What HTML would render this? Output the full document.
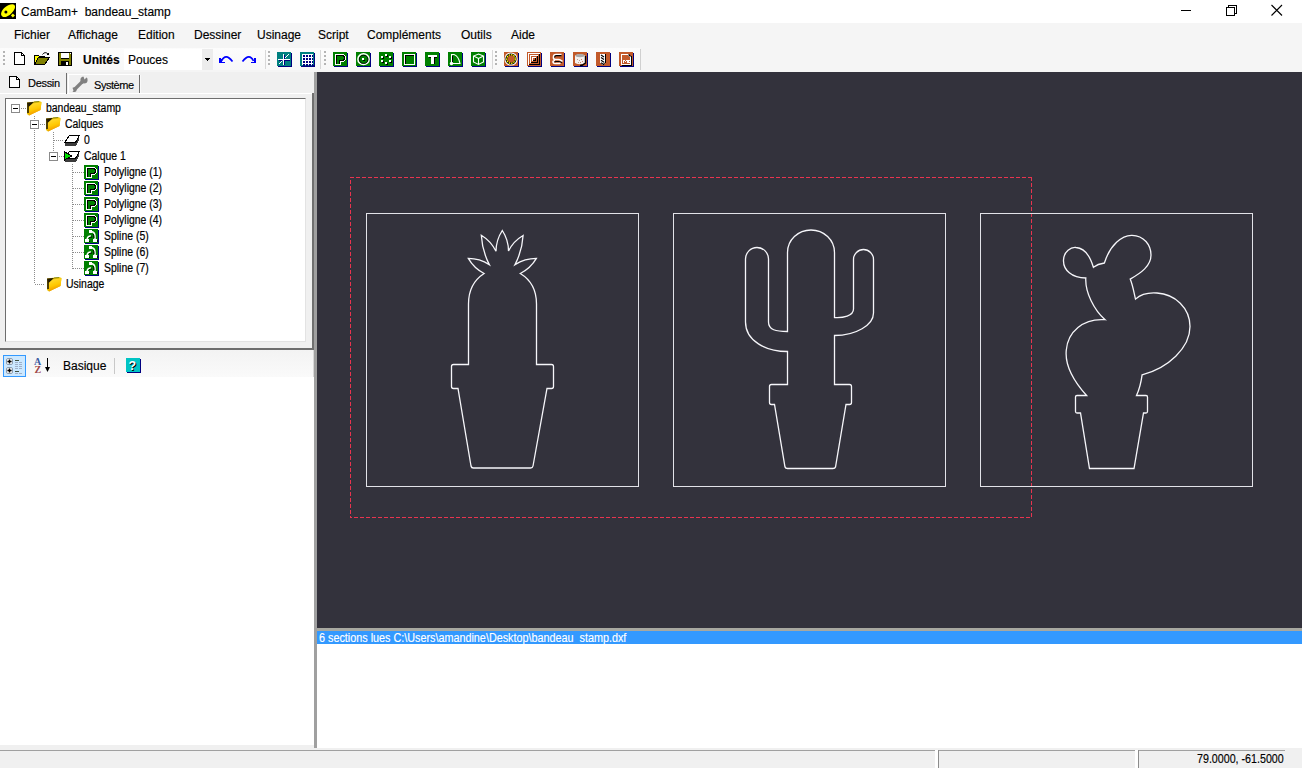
<!DOCTYPE html>
<html><head><meta charset="utf-8">
<style>
*{margin:0;padding:0;box-sizing:border-box}
html,body{width:1302px;height:768px;overflow:hidden;background:#f0f0f0;font-family:"Liberation Sans",sans-serif;position:relative}
.a{position:absolute}
.t{position:absolute;white-space:nowrap;color:#000;line-height:1;-webkit-text-stroke:0.15px currentColor}
.m{font-size:12px;top:29px}
.tr{font-size:12px;transform:scaleX(0.87);transform-origin:0 0;-webkit-text-stroke:0.2px #000}
</style></head><body>
<div class="a" style="left:0;top:0;width:1302px;height:23px;background:#fff"></div>
<div class="t" style="left:21px;top:6px;font-size:12px">CamBam+&nbsp;&nbsp;bandeau_stamp</div>
<div class="a" style="left:0;top:23px;width:1302px;height:49px;background:#f5f5f5"></div>
<div class="t m" style="left:14px">Fichier</div>
<div class="t m" style="left:68px">Affichage</div>
<div class="t m" style="left:138px">Edition</div>
<div class="t m" style="left:194px">Dessiner</div>
<div class="t m" style="left:257px">Usinage</div>
<div class="t m" style="left:318px">Script</div>
<div class="t m" style="left:367px">Compléments</div>
<div class="t m" style="left:461px">Outils</div>
<div class="t m" style="left:511px">Aide</div>
<div class="a" style="left:0;top:48px;width:640px;height:22px;background:linear-gradient(#fcfcfc,#f8f8f8)"></div>
<div class="t" style="left:83px;top:54px;font-size:12px;font-weight:bold">Unités</div>
<div class="a" style="left:124px;top:49px;width:78px;height:21px;background:#fff"></div>
<div class="a" style="left:202px;top:49px;width:11px;height:21px;background:#ececec"></div>
<div class="t" style="left:128px;top:54px;font-size:12px">Pouces</div>
<div class="a" style="left:0;top:72px;width:314px;height:676px;background:#f0f0f0"></div>
<div class="a" style="left:0;top:93px;width:313px;height:1px;background:#fff"></div>
<div class="a" style="left:66px;top:73px;width:1px;height:21px;background:#6e6e6e"></div>
<div class="a" style="left:68px;top:74px;width:71px;height:1px;background:#fff"></div>
<div class="a" style="left:68px;top:74px;width:1px;height:19px;background:#fff"></div>
<div class="a" style="left:139px;top:75px;width:1px;height:18px;background:#6e6e6e"></div>
<div class="a" style="left:140px;top:75px;width:1px;height:18px;background:#fafafa"></div>
<div class="t" style="left:28px;top:78px;font-size:11px;letter-spacing:-0.3px">Dessin</div>
<div class="t" style="left:94px;top:80px;font-size:11px;letter-spacing:-0.45px">Système</div>
<div class="a" style="left:317px;top:72px;width:985px;height:556px;background:#33323c"></div>
<div class="a" style="left:312px;top:93px;width:2px;height:257px;background:#707070"></div>
<div class="a" style="left:314px;top:72px;width:3px;height:676px;background:#a0a0a0"></div>
<svg class="a" style="left:0;top:0" width="1302" height="768" viewBox="0 0 1302 768">
<g fill="none" stroke-width="1">
<g stroke="#e8344f" stroke-dasharray="4 2" shape-rendering="crispEdges">
<path d="M350,177.5 H1032"/>
<path d="M350,517.5 H1032" stroke-dashoffset="2"/>
<path d="M350.5,177 V518" stroke-dashoffset="3"/>
<path d="M1031.5,177 V518"/>
</g>
<rect x="366.5" y="213.5" width="272" height="273" stroke="#e2e2e8"/>
<rect x="673.5" y="213.5" width="272" height="273" stroke="#e2e2e8"/>
<rect x="980.5" y="213.5" width="272" height="273" stroke="#e2e2e8"/>
<path d="M468.5,364.5 L468.5,304 C468.5,290 474,280 484.1,273.5 Q473.99,268.26 468.30,258.40 Q479.71,258.43 489.30,264.60 Q482.21,250.74 481.30,235.20 Q491.01,241.09 496.00,251.30 Q496.09,239.97 502.30,230.50 Q508.46,239.82 508.50,251.00 Q513.47,241.06 523.10,235.50 Q522.13,250.91 515.00,264.60 Q524.81,258.43 536.40,258.40 Q530.54,268.28 520.30,273.50 C531,280 536.5,290 536.5,304 L536.5,364.5 L551.5,364.5 Q553.5,364.5 553.5,366.5 L553.5,386.5 Q553.5,388.5 551.5,388.5 L547,388.5 L533,466 Q532.6,468 530.6,468 L473.4,468 Q471.4,468 471,466 L458,388.5 L453.5,388.5 Q451.5,388.5 451.5,386.5 L451.5,366.5 Q451.5,364.5 453.5,364.5 Z" stroke="#f6f6fa" stroke-width="1.3"/>
<path d="M787.5,384.5 L787.5,351.5 C766,351.5 745.5,341 745.5,322 L745.5,259 A11.5,11.5 0 0 1 768.5,259 L768.5,322 C768.5,330 776,331.5 787.5,331.5 L787.5,252.5 A23.5,22.5 0 0 1 834.5,252.5 L834.5,317.5 C843,318 853.5,316 853.5,309 L853.5,259.5 A10,10 0 0 1 873.5,259.5 L873.5,313 C873.5,325 856,335.5 834.5,335.5 L834.5,384.5 L849.5,384.5 Q851.5,384.5 851.5,386.5 L851.5,402.5 Q851.5,404.5 849.5,404.5 L846,404.5 L835.5,467 Q835,468.5 833,468.5 L787.5,468.5 Q785.5,468.5 785,467 L774.5,404.5 L771.5,404.5 Q769.5,404.5 769.5,402.5 L769.5,386.5 Q769.5,384.5 771.5,384.5 Z" stroke="#f6f6fa" stroke-width="1.3"/>
<path d="M1086.6,395.5 C1071,378 1065,362 1066.3,350 C1067.8,332 1083,318 1105.1,319.7 C1094,310 1085,292 1085.8,278 C1072,278 1063,270 1063.5,260 C1064,251 1071,247 1076,247.5 C1085,248 1090,256 1093.4,267.3 C1097,264.5 1101,263.5 1104.4,263 C1110,245 1122,235 1132,235.3 C1144,235.5 1151,245 1151,255 C1151,266 1141,273 1130.2,279.1 C1133,286 1134,293 1135.5,299.1 C1142,293 1150,292.5 1157,293 C1175,294 1190,308 1190,326.5 C1190,348 1168,368 1142.1,374.8 C1141,383 1139,390 1136.5,395.5 L1146,395.5 Q1147.5,395.5 1147.5,397 L1147.5,411.5 Q1147.5,413 1146,413 L1143.5,413 L1134,468.5 L1089.5,468.5 L1080.5,413 L1077,413 Q1075.5,413 1075.5,411.5 L1075.5,397 Q1075.5,395.5 1077,395.5 Z" stroke="#f6f6fa" stroke-width="1.3"/>
</g></svg>
<div class="a" style="left:317px;top:628px;width:985px;height:3px;background:#a8a8a0"></div>
<div class="a" style="left:317px;top:631px;width:985px;height:13px;background:#3399ff"></div>
<div class="t" style="left:319px;top:632px;font-size:12px;color:#fff;transform:scaleX(0.9);transform-origin:0 0">6 sections lues C:\Users\amandine\Desktop\bandeau_stamp.dxf</div>
<div class="a" style="left:317px;top:644px;width:985px;height:104px;background:#fff"></div>
<div class="a" style="left:5px;top:98px;width:301px;height:244px;background:#fff;border-top:1px solid #6e6e6e;border-left:1px solid #6e6e6e;border-right:1px solid #e3e3e3;border-bottom:1px solid #e3e3e3"></div>
<div class="t tr" style="left:46px;top:102px">bandeau_stamp</div>
<div class="t tr" style="left:65px;top:118px">Calques</div>
<div class="t tr" style="left:84px;top:134px">0</div>
<div class="t tr" style="left:84px;top:150px">Calque 1</div>
<div class="t tr" style="left:104px;top:166px">Polyligne (1)</div>
<div class="t tr" style="left:104px;top:182px">Polyligne (2)</div>
<div class="t tr" style="left:104px;top:198px">Polyligne (3)</div>
<div class="t tr" style="left:104px;top:214px">Polyligne (4)</div>
<div class="t tr" style="left:104px;top:230px">Spline (5)</div>
<div class="t tr" style="left:104px;top:246px">Spline (6)</div>
<div class="t tr" style="left:104px;top:262px">Spline (7)</div>
<div class="t tr" style="left:66px;top:278px">Usinage</div>
<div class="a" style="left:0;top:348px;width:314px;height:2px;background:#6e6e6e"></div>
<div class="a" style="left:0;top:350px;width:314px;height:27px;background:linear-gradient(#f3f3f3,#fafafa)"></div>
<div class="t" style="left:63px;top:360px;font-size:12px">Basique</div>
<div class="a" style="left:0;top:377px;width:314px;height:368px;background:#fff"></div><div class="a" style="left:313px;top:350px;width:1px;height:27px;background:#d8d8d8"></div>
<div class="a" style="left:0;top:750px;width:1302px;height:18px;background:#f0f0f0"></div><div class="a" style="left:0;top:750px;width:1285px;height:1px;background:#a0a0a0"></div>
<div class="a" style="left:935px;top:750px;width:3px;height:18px;background:#fff"></div>
<div class="a" style="left:938px;top:750px;width:1px;height:18px;background:#8c8c8c"></div>
<div class="a" style="left:1135px;top:750px;width:3px;height:18px;background:#fff"></div>
<div class="a" style="left:1138px;top:750px;width:1px;height:18px;background:#8c8c8c"></div>
<div class="t" style="left:1197px;top:753px;font-size:12px;transform:scaleX(0.89);transform-origin:0 0">79.0000, -61.5000</div>
<svg class="a" style="left:0;top:0" width="1302" height="768" shape-rendering="crispEdges"><defs><linearGradient id="fg" x1="0" y1="0" x2="0.3" y2="1"><stop offset="0" stop-color="#ffe040"/><stop offset="0.6" stop-color="#ffc800"/><stop offset="1" stop-color="#f09000"/></linearGradient></defs><rect x="0" y="3" width="16" height="16" fill="#000"/><path d="M14.6,5.2 C15.8,7 14.6,10 11.5,13.2 C8.3,16.4 4.6,18 2.4,16.6 C0.2,15.2 0.9,11.4 4.2,8.1 C7.5,4.8 13.2,3.2 14.6,5.2Z" fill="#ffff00" shape-rendering="auto"/><circle cx="5.9" cy="11.9" r="1.5" fill="#000" shape-rendering="auto"/><path d="M12.9,13.6 L14.9,15.6 L12.9,17.6 L10.9,15.6Z" fill="#ffff00" shape-rendering="auto"/><rect x="1181" y="10" width="10" height="1" fill="#000"/><path d="M1226.5,7.5h8v8h-8z M1228.5,7.5v-2h8v8h-2" fill="none" stroke="#000" stroke-width="1"/><path d="M1271.5,5 L1282,15.5 M1282,5 L1271.5,15.5" stroke="#000" stroke-width="1.1" shape-rendering="auto"/><rect x="3" y="51" width="2" height="2" fill="#b4b4b4"/><rect x="3" y="55" width="2" height="2" fill="#b4b4b4"/><rect x="3" y="59" width="2" height="2" fill="#b4b4b4"/><rect x="3" y="63" width="2" height="2" fill="#b4b4b4"/><path d="M14.5,52.5H21.5L24.5,55.5V64.5H14.5Z" fill="#fff" stroke="#000"/><rect x="21" y="53" width="1" height="3" fill="#000"/><rect x="21" y="55" width="3" height="1" fill="#000"/><path d="M34.5,64.5V55.5H38.5L39.5,56.5H44.5V57.5" fill="#ffff00" stroke="#000"/><rect x="35" y="56" width="4" height="8" fill="#ffff00"/><rect x="35" y="57" width="9" height="3" fill="#ffff00"/><path d="M34.5,64.5L38.5,57.5H49.5L44.5,64.5Z" fill="#808000" stroke="#000"/><path d="M42.5,54.5Q45,51 48,54" fill="none" stroke="#000" shape-rendering="auto"/><path d="M46,55H49V52Z" fill="#000"/><rect x="58" y="52" width="14" height="14" fill="#000"/><rect x="59" y="53" width="12" height="12" fill="#808000"/><rect x="61" y="53" width="8" height="6" fill="#fff"/><rect x="61" y="58" width="8" height="1" fill="#000"/><rect x="61" y="61" width="8" height="4" fill="#000"/><rect x="66" y="62" width="2" height="3" fill="#fff"/><rect x="70" y="53" width="1" height="1" fill="#fff"/><path d="M221.5,61 Q225.5,52.5 232.5,61.5" fill="none" stroke="#0000ff" stroke-width="1.7" shape-rendering="auto"/><path d="M219,57.5 V63 H225 L223.5,61.5 H221.5 V59Z" fill="#0000ff"/><path d="M242.5,61.5 Q249.5,52.5 253.5,61" fill="none" stroke="#0000ff" stroke-width="1.7" shape-rendering="auto"/><path d="M256,57.5 V63 H250 L251.5,61.5 H253.5 V59Z" fill="#0000ff"/><rect x="265" y="50" width="1" height="19" fill="#d8d8d8"/><rect x="268" y="51" width="2" height="2" fill="#b4b4b4"/><rect x="268" y="55" width="2" height="2" fill="#b4b4b4"/><rect x="268" y="59" width="2" height="2" fill="#b4b4b4"/><rect x="268" y="63" width="2" height="2" fill="#b4b4b4"/><rect x="278" y="53" width="14" height="14" fill="#000080"/><rect x="277" y="52" width="14" height="14" fill="#008080"/><rect x="283" y="54" width="1" height="11" fill="#fff"/><rect x="278" y="59" width="12" height="1" fill="#fff"/><rect x="284" y="55" width="1" height="4" fill="#000080"/><rect x="284" y="60" width="1" height="5" fill="#000080"/><rect x="279" y="60" width="4" height="1" fill="#000080"/><rect x="285" y="60" width="5" height="1" fill="#000080"/><path d="M285,58 L289,54 M279,64 L282.5,60.5" stroke="#fff" stroke-width="1" shape-rendering="auto"/><rect x="301" y="53" width="14" height="14" fill="#000080"/><rect x="300" y="52" width="14" height="14" fill="#008080"/><rect x="302" y="54" width="11" height="11" fill="#fff"/><rect x="303" y="55" width="2" height="2" fill="#000080"/><rect x="303" y="58" width="2" height="2" fill="#000080"/><rect x="303" y="61" width="2" height="2" fill="#000080"/><rect x="303" y="64" width="2" height="2" fill="#000080"/><rect x="306" y="55" width="2" height="2" fill="#000080"/><rect x="306" y="58" width="2" height="2" fill="#000080"/><rect x="306" y="61" width="2" height="2" fill="#000080"/><rect x="306" y="64" width="2" height="2" fill="#000080"/><rect x="309" y="55" width="2" height="2" fill="#000080"/><rect x="309" y="58" width="2" height="2" fill="#000080"/><rect x="309" y="61" width="2" height="2" fill="#000080"/><rect x="309" y="64" width="2" height="2" fill="#000080"/><rect x="312" y="55" width="2" height="2" fill="#000080"/><rect x="312" y="58" width="2" height="2" fill="#000080"/><rect x="312" y="61" width="2" height="2" fill="#000080"/><rect x="312" y="64" width="2" height="2" fill="#000080"/><rect x="313" y="54" width="1" height="11" fill="#008080"/><rect x="320" y="50" width="1" height="19" fill="#d8d8d8"/><rect x="324" y="51" width="2" height="2" fill="#b4b4b4"/><rect x="324" y="55" width="2" height="2" fill="#b4b4b4"/><rect x="324" y="59" width="2" height="2" fill="#b4b4b4"/><rect x="324" y="63" width="2" height="2" fill="#b4b4b4"/><rect x="334" y="53" width="14" height="14" fill="#000080"/><rect x="333" y="52" width="14" height="14" fill="#008000"/><path d="M335.5,54.5H343.5L345.5,56.5V59.5L343.5,61.5H340.5V64.5H335.5Z" fill="none" stroke="#fff"/><path d="M336.5,63.5V55.5H343L344.5,57V59L343,60.5H339.5V63.5" fill="none" stroke="#000"/><rect x="357" y="53" width="14" height="14" fill="#000080"/><rect x="356" y="52" width="14" height="14" fill="#008000"/><ellipse cx="363.5" cy="59.2" rx="5.6" ry="5.4" fill="none" stroke="#fff" stroke-width="1.5" shape-rendering="auto"/><ellipse cx="363.7" cy="59.4" rx="4.2" ry="4.0" fill="none" stroke="#000" stroke-width="0.9" shape-rendering="auto"/><rect x="362" y="58" width="2" height="2" fill="#fff"/><rect x="363" y="60" width="2" height="1" fill="#000"/><rect x="380" y="53" width="14" height="14" fill="#000080"/><rect x="379" y="52" width="14" height="14" fill="#008000"/><rect x="386" y="55" width="2" height="2" fill="#000"/><rect x="385" y="54" width="2" height="2" fill="#fff"/><rect x="382" y="57" width="2" height="2" fill="#000"/><rect x="381" y="56" width="2" height="2" fill="#fff"/><rect x="390" y="57" width="2" height="2" fill="#000"/><rect x="389" y="56" width="2" height="2" fill="#fff"/><rect x="382" y="61" width="2" height="2" fill="#000"/><rect x="381" y="60" width="2" height="2" fill="#fff"/><rect x="390" y="61" width="2" height="2" fill="#000"/><rect x="389" y="60" width="2" height="2" fill="#fff"/><rect x="386" y="63" width="2" height="2" fill="#000"/><rect x="385" y="62" width="2" height="2" fill="#fff"/><rect x="403" y="53" width="14" height="14" fill="#000080"/><rect x="402" y="52" width="14" height="14" fill="#008000"/><rect x="404.5" y="54.5" width="10" height="10" fill="none" stroke="#fff"/><path d="M405.5,63.5V55.5H413.5" fill="none" stroke="#000"/><rect x="426" y="53" width="14" height="14" fill="#000080"/><rect x="425" y="52" width="14" height="14" fill="#008000"/><rect x="428" y="55" width="9" height="2" fill="#fff"/><rect x="431" y="57" width="3" height="7" fill="#fff"/><rect x="429" y="57" width="2" height="1" fill="#000"/><rect x="434" y="57" width="3" height="1" fill="#000"/><rect x="434" y="58" width="1" height="6" fill="#000"/><rect x="449" y="53" width="14" height="14" fill="#000080"/><rect x="448" y="52" width="14" height="14" fill="#008000"/><path d="M451.5,63V54.5H454 Q458.5,56 460,63.5H451.5" fill="none" stroke="#fff" stroke-width="1.1" shape-rendering="auto"/><path d="M452.5,62V55.6" stroke="#000" fill="none"/><circle cx="451.5" cy="63.5" r="1.7" fill="#fff" shape-rendering="auto"/><rect x="472" y="53" width="14" height="14" fill="#000080"/><rect x="471" y="52" width="14" height="14" fill="#008000"/><path d="M478.5,54 L483.5,56 V62 L478.5,64.5 L473.5,62 V56 Z M473.5,56 L478.5,58.5 L483.5,56 M478.5,58.5V64.5" fill="none" stroke="#fff" stroke-width="1.1" shape-rendering="auto"/><rect x="492" y="50" width="1" height="19" fill="#d8d8d8"/><rect x="495" y="51" width="2" height="2" fill="#b4b4b4"/><rect x="495" y="55" width="2" height="2" fill="#b4b4b4"/><rect x="495" y="59" width="2" height="2" fill="#b4b4b4"/><rect x="495" y="63" width="2" height="2" fill="#b4b4b4"/><rect x="505" y="53" width="14" height="14" fill="#000080"/><rect x="504" y="52" width="14" height="14" fill="#c25a2a"/><circle cx="511" cy="59" r="6.6" fill="#fff" shape-rendering="auto"/><circle cx="511" cy="59" r="5.6" fill="#000" shape-rendering="auto"/><circle cx="511" cy="59" r="4.2" fill="none" stroke="#ffff00" stroke-width="1.4" stroke-dasharray="1.6 0.8" shape-rendering="auto"/><circle cx="511" cy="59" r="3.4" fill="#c25a2a" shape-rendering="auto"/><rect x="504" y="52" width="2" height="2" fill="#c25a2a"/><rect x="516" y="52" width="2" height="2" fill="#c25a2a"/><rect x="504" y="64" width="2" height="2" fill="#c25a2a"/><rect x="516" y="64" width="2" height="2" fill="#c25a2a"/><rect x="528" y="53" width="14" height="14" fill="#000080"/><rect x="527" y="52" width="14" height="14" fill="#c25a2a"/><rect x="528.5" y="53.5" width="11" height="11" fill="none" stroke="#fff"/><rect x="530.5" y="55.5" width="7" height="7" fill="none" stroke="#fff"/><rect x="532.5" y="57.5" width="3" height="3" fill="none" stroke="#fff"/><rect x="539" y="54" width="1" height="11" fill="#000"/><rect x="529" y="64" width="11" height="1" fill="#000"/><rect x="537" y="56" width="1" height="7" fill="#000"/><rect x="531" y="62" width="7" height="1" fill="#000"/><rect x="535" y="58" width="1" height="3" fill="#000"/><rect x="533" y="60" width="3" height="1" fill="#000"/><rect x="551" y="53" width="14" height="14" fill="#000080"/><rect x="550" y="52" width="14" height="14" fill="#c25a2a"/><path d="M561.5,54.5 H556 Q553.5,54.5 553.5,57 V58 Q553.5,59.5 555.5,59.5 H558.5 Q560,59.5 561,60.5 L562.5,61.5 M560.5,62.5 L559.5,63.5 H555 Q553,63.5 553,61.5 Q553,60.5 555,60.5" fill="none" stroke="#fff" stroke-width="1.6" shape-rendering="auto"/><path d="M561.5,55.6 H556.5 Q554.6,55.6 554.6,57.5 M554.5,62 Q555,61.5 556,61.5 H559 L562,62.5" fill="none" stroke="#000" stroke-width="1.1" shape-rendering="auto"/><rect x="574" y="53" width="14" height="14" fill="#000080"/><rect x="573" y="52" width="14" height="14" fill="#c25a2a"/><path d="M575,55.5 Q580,53 585,55.5 V63 Q580,65.5 575,63 Z" fill="#f4f0ee" shape-rendering="auto"/><ellipse cx="580" cy="55.6" rx="4.6" ry="1.6" fill="#a8a8a8" shape-rendering="auto"/><rect x="577" y="59" width="1" height="1" fill="#c0a090"/><rect x="579" y="60" width="1" height="1" fill="#c0a090"/><rect x="581" y="59" width="1" height="1" fill="#d08060"/><rect x="582" y="61" width="1" height="1" fill="#d08060"/><rect x="578" y="62" width="1" height="1" fill="#c0a090"/><rect x="580" y="62" width="1" height="1" fill="#d08060"/><path d="M585.5,56 V63 Q583,65.5 580,65.5" fill="none" stroke="#000" stroke-width="1.4" shape-rendering="auto"/><rect x="597" y="53" width="14" height="14" fill="#000080"/><rect x="596" y="52" width="14" height="14" fill="#c25a2a"/><path d="M600,53.5 H606 V62.5 L603,65.5 L600,62.5 Z" fill="#fff"/><rect x="605" y="54" width="1" height="9" fill="#000"/><path d="M605,62.5 L603,65" stroke="#000" stroke-width="1" shape-rendering="auto"/><path d="M601,55.0 L604,57.0" stroke="#000" stroke-width="1.2" shape-rendering="auto"/><path d="M601,57.6 L604,59.6" stroke="#000" stroke-width="1.2" shape-rendering="auto"/><path d="M601,60.2 L604,62.2" stroke="#000" stroke-width="1.2" shape-rendering="auto"/><path d="M601,62.8 L604,64.8" stroke="#000" stroke-width="1.2" shape-rendering="auto"/><rect x="620" y="53" width="14" height="14" fill="#000080"/><rect x="619" y="52" width="14" height="14" fill="#c25a2a"/><path d="M621.5,54.5 H628 L630.5,57 V64.5 H621.5 Z" fill="none" stroke="#fff" stroke-width="1"/><rect x="631" y="56" width="1" height="10" fill="#000"/><rect x="622" y="65" width="10" height="1" fill="#000"/><path d="M628.5,54.5 L630.5,56.5" stroke="#000" stroke-width="1.3" shape-rendering="auto"/><rect x="623" y="60" width="1" height="3" fill="#fff"/><rect x="624" y="60" width="1" height="1" fill="#fff"/><rect x="625" y="61" width="1" height="1" fill="#fff"/><rect x="626" y="60" width="1" height="1" fill="#fff"/><rect x="627" y="60" width="1" height="3" fill="#fff"/><rect x="628" y="60" width="2" height="1" fill="#fff"/><rect x="628" y="60" width="1" height="3" fill="#fff"/><rect x="628" y="62" width="2" height="1" fill="#fff"/><rect x="640" y="49" width="1" height="21" fill="#d0d0d0"/><path d="M204,58 H210 L207,61Z" fill="#000"/><path d="M9.5,76.5H16.5L19.5,79.5V87.5H9.5Z" fill="#fff" stroke="#000"/><rect x="16" y="77" width="1" height="3" fill="#000"/><rect x="16" y="79" width="3" height="1" fill="#000"/><path d="M74,90 L82,82" stroke="#808080" stroke-width="3.2" stroke-linecap="round" shape-rendering="auto"/><circle cx="84" cy="80" r="3.6" fill="#808080" shape-rendering="auto"/><path d="M84.5,79.5 L88,76 L88,75 L83,75Z" fill="#f0f0f0" shape-rendering="auto"/><circle cx="74.3" cy="89.7" r="2.4" fill="#808080" shape-rendering="auto"/><path d="M73.5,90.5 L71,93 L72,87Z" fill="#f0f0f0" shape-rendering="auto"/><rect x="11.5" y="104.5" width="8" height="8" fill="#fff" stroke="#8a8a8a"/><rect x="13" y="108" width="5" height="1" fill="#000"/><rect x="21" y="108" width="1" height="1" fill="#8c8c8c"/><rect x="23" y="108" width="1" height="1" fill="#8c8c8c"/><rect x="25" y="108" width="1" height="1" fill="#8c8c8c"/><path d="M27,102.5 L39,101 L41.5,102 L40.5,110 L29,115.5 L27,114Z" fill="#e8c000" shape-rendering="auto"/><path d="M29,104 L41.5,102.2 L40.5,110 L29,115.5Z" fill="url(#fg)" shape-rendering="auto"/><path d="M27,102.5 L34,102 L28.5,107Z" fill="#201800" shape-rendering="auto"/><path d="M28,103 V113" stroke="#2a2000" stroke-width="1.6" fill="none" shape-rendering="auto"/><path d="M34,102 L39,101.5" stroke="#8a8a20" stroke-width="1" fill="none" shape-rendering="auto"/><rect x="34" y="116" width="1" height="1" fill="#8c8c8c"/><rect x="34" y="118" width="1" height="1" fill="#8c8c8c"/><rect x="34" y="120" width="1" height="1" fill="#8c8c8c"/><rect x="34" y="122" width="1" height="1" fill="#8c8c8c"/><rect x="34" y="124" width="1" height="1" fill="#8c8c8c"/><rect x="34" y="126" width="1" height="1" fill="#8c8c8c"/><rect x="34" y="128" width="1" height="1" fill="#8c8c8c"/><rect x="34" y="130" width="1" height="1" fill="#8c8c8c"/><rect x="34" y="132" width="1" height="1" fill="#8c8c8c"/><rect x="34" y="134" width="1" height="1" fill="#8c8c8c"/><rect x="34" y="136" width="1" height="1" fill="#8c8c8c"/><rect x="34" y="138" width="1" height="1" fill="#8c8c8c"/><rect x="34" y="140" width="1" height="1" fill="#8c8c8c"/><rect x="34" y="142" width="1" height="1" fill="#8c8c8c"/><rect x="34" y="144" width="1" height="1" fill="#8c8c8c"/><rect x="34" y="146" width="1" height="1" fill="#8c8c8c"/><rect x="34" y="148" width="1" height="1" fill="#8c8c8c"/><rect x="34" y="150" width="1" height="1" fill="#8c8c8c"/><rect x="34" y="152" width="1" height="1" fill="#8c8c8c"/><rect x="34" y="154" width="1" height="1" fill="#8c8c8c"/><rect x="34" y="156" width="1" height="1" fill="#8c8c8c"/><rect x="34" y="158" width="1" height="1" fill="#8c8c8c"/><rect x="34" y="160" width="1" height="1" fill="#8c8c8c"/><rect x="34" y="162" width="1" height="1" fill="#8c8c8c"/><rect x="34" y="164" width="1" height="1" fill="#8c8c8c"/><rect x="34" y="166" width="1" height="1" fill="#8c8c8c"/><rect x="34" y="168" width="1" height="1" fill="#8c8c8c"/><rect x="34" y="170" width="1" height="1" fill="#8c8c8c"/><rect x="34" y="172" width="1" height="1" fill="#8c8c8c"/><rect x="34" y="174" width="1" height="1" fill="#8c8c8c"/><rect x="34" y="176" width="1" height="1" fill="#8c8c8c"/><rect x="34" y="178" width="1" height="1" fill="#8c8c8c"/><rect x="34" y="180" width="1" height="1" fill="#8c8c8c"/><rect x="34" y="182" width="1" height="1" fill="#8c8c8c"/><rect x="34" y="184" width="1" height="1" fill="#8c8c8c"/><rect x="34" y="186" width="1" height="1" fill="#8c8c8c"/><rect x="34" y="188" width="1" height="1" fill="#8c8c8c"/><rect x="34" y="190" width="1" height="1" fill="#8c8c8c"/><rect x="34" y="192" width="1" height="1" fill="#8c8c8c"/><rect x="34" y="194" width="1" height="1" fill="#8c8c8c"/><rect x="34" y="196" width="1" height="1" fill="#8c8c8c"/><rect x="34" y="198" width="1" height="1" fill="#8c8c8c"/><rect x="34" y="200" width="1" height="1" fill="#8c8c8c"/><rect x="34" y="202" width="1" height="1" fill="#8c8c8c"/><rect x="34" y="204" width="1" height="1" fill="#8c8c8c"/><rect x="34" y="206" width="1" height="1" fill="#8c8c8c"/><rect x="34" y="208" width="1" height="1" fill="#8c8c8c"/><rect x="34" y="210" width="1" height="1" fill="#8c8c8c"/><rect x="34" y="212" width="1" height="1" fill="#8c8c8c"/><rect x="34" y="214" width="1" height="1" fill="#8c8c8c"/><rect x="34" y="216" width="1" height="1" fill="#8c8c8c"/><rect x="34" y="218" width="1" height="1" fill="#8c8c8c"/><rect x="34" y="220" width="1" height="1" fill="#8c8c8c"/><rect x="34" y="222" width="1" height="1" fill="#8c8c8c"/><rect x="34" y="224" width="1" height="1" fill="#8c8c8c"/><rect x="34" y="226" width="1" height="1" fill="#8c8c8c"/><rect x="34" y="228" width="1" height="1" fill="#8c8c8c"/><rect x="34" y="230" width="1" height="1" fill="#8c8c8c"/><rect x="34" y="232" width="1" height="1" fill="#8c8c8c"/><rect x="34" y="234" width="1" height="1" fill="#8c8c8c"/><rect x="34" y="236" width="1" height="1" fill="#8c8c8c"/><rect x="34" y="238" width="1" height="1" fill="#8c8c8c"/><rect x="34" y="240" width="1" height="1" fill="#8c8c8c"/><rect x="34" y="242" width="1" height="1" fill="#8c8c8c"/><rect x="34" y="244" width="1" height="1" fill="#8c8c8c"/><rect x="34" y="246" width="1" height="1" fill="#8c8c8c"/><rect x="34" y="248" width="1" height="1" fill="#8c8c8c"/><rect x="34" y="250" width="1" height="1" fill="#8c8c8c"/><rect x="34" y="252" width="1" height="1" fill="#8c8c8c"/><rect x="34" y="254" width="1" height="1" fill="#8c8c8c"/><rect x="34" y="256" width="1" height="1" fill="#8c8c8c"/><rect x="34" y="258" width="1" height="1" fill="#8c8c8c"/><rect x="34" y="260" width="1" height="1" fill="#8c8c8c"/><rect x="34" y="262" width="1" height="1" fill="#8c8c8c"/><rect x="34" y="264" width="1" height="1" fill="#8c8c8c"/><rect x="34" y="266" width="1" height="1" fill="#8c8c8c"/><rect x="34" y="268" width="1" height="1" fill="#8c8c8c"/><rect x="34" y="270" width="1" height="1" fill="#8c8c8c"/><rect x="34" y="272" width="1" height="1" fill="#8c8c8c"/><rect x="34" y="274" width="1" height="1" fill="#8c8c8c"/><rect x="34" y="276" width="1" height="1" fill="#8c8c8c"/><rect x="34" y="278" width="1" height="1" fill="#8c8c8c"/><rect x="34" y="280" width="1" height="1" fill="#8c8c8c"/><rect x="34" y="282" width="1" height="1" fill="#8c8c8c"/><rect x="30.5" y="120.5" width="8" height="8" fill="#fff" stroke="#8a8a8a"/><rect x="32" y="124" width="5" height="1" fill="#000"/><rect x="40" y="124" width="1" height="1" fill="#8c8c8c"/><rect x="42" y="124" width="1" height="1" fill="#8c8c8c"/><rect x="44" y="124" width="1" height="1" fill="#8c8c8c"/><path d="M46,118.5 L58,117 L60.5,118 L59.5,126 L48,131.5 L46,130Z" fill="#e8c000" shape-rendering="auto"/><path d="M48,120 L60.5,118.2 L59.5,126 L48,131.5Z" fill="url(#fg)" shape-rendering="auto"/><path d="M46,118.5 L53,118 L47.5,123Z" fill="#201800" shape-rendering="auto"/><path d="M47,119 V129" stroke="#2a2000" stroke-width="1.6" fill="none" shape-rendering="auto"/><path d="M53,118 L58,117.5" stroke="#8a8a20" stroke-width="1" fill="none" shape-rendering="auto"/><rect x="53" y="132" width="1" height="1" fill="#8c8c8c"/><rect x="53" y="134" width="1" height="1" fill="#8c8c8c"/><rect x="53" y="136" width="1" height="1" fill="#8c8c8c"/><rect x="53" y="138" width="1" height="1" fill="#8c8c8c"/><rect x="53" y="140" width="1" height="1" fill="#8c8c8c"/><rect x="53" y="142" width="1" height="1" fill="#8c8c8c"/><rect x="53" y="144" width="1" height="1" fill="#8c8c8c"/><rect x="53" y="146" width="1" height="1" fill="#8c8c8c"/><rect x="53" y="148" width="1" height="1" fill="#8c8c8c"/><rect x="53" y="150" width="1" height="1" fill="#8c8c8c"/><rect x="53" y="152" width="1" height="1" fill="#8c8c8c"/><rect x="53" y="154" width="1" height="1" fill="#8c8c8c"/><rect x="53" y="156" width="1" height="1" fill="#8c8c8c"/><rect x="54" y="140" width="1" height="1" fill="#8c8c8c"/><rect x="56" y="140" width="1" height="1" fill="#8c8c8c"/><rect x="58" y="140" width="1" height="1" fill="#8c8c8c"/><rect x="60" y="140" width="1" height="1" fill="#8c8c8c"/><rect x="62" y="140" width="1" height="1" fill="#8c8c8c"/><path d="M69.5,135.5 H79.5 L75.5,142.5 H64.5 Z" fill="#fff" stroke="#000" stroke-width="1"/><path d="M65,143 H76 L79,137.5 V140 L76,146 H65Z" fill="#3c3c3c"/><path d="M64.5,142.5 H75.5 L79.5,135.5" fill="none" stroke="#000"/><rect x="49.5" y="152.5" width="8" height="8" fill="#fff" stroke="#8a8a8a"/><rect x="51" y="156" width="5" height="1" fill="#000"/><rect x="59" y="156" width="1" height="1" fill="#8c8c8c"/><rect x="61" y="156" width="1" height="1" fill="#8c8c8c"/><rect x="63" y="156" width="1" height="1" fill="#8c8c8c"/><path d="M69.5,151.5 H79.5 L75.5,158.5 H64.5 Z" fill="#fff" stroke="#000" stroke-width="1"/><path d="M65,159 H76 L79,153.5 V156 L76,162 H65Z" fill="#3c3c3c"/><path d="M64.5,158.5 H75.5 L79.5,151.5" fill="none" stroke="#000"/><path d="M64.5,152 V160 L72,156Z" fill="#00e000" stroke="#000" stroke-width="1"/><rect x="72" y="164" width="1" height="1" fill="#8c8c8c"/><rect x="72" y="166" width="1" height="1" fill="#8c8c8c"/><rect x="72" y="168" width="1" height="1" fill="#8c8c8c"/><rect x="72" y="170" width="1" height="1" fill="#8c8c8c"/><rect x="72" y="172" width="1" height="1" fill="#8c8c8c"/><rect x="72" y="174" width="1" height="1" fill="#8c8c8c"/><rect x="72" y="176" width="1" height="1" fill="#8c8c8c"/><rect x="72" y="178" width="1" height="1" fill="#8c8c8c"/><rect x="72" y="180" width="1" height="1" fill="#8c8c8c"/><rect x="72" y="182" width="1" height="1" fill="#8c8c8c"/><rect x="72" y="184" width="1" height="1" fill="#8c8c8c"/><rect x="72" y="186" width="1" height="1" fill="#8c8c8c"/><rect x="72" y="188" width="1" height="1" fill="#8c8c8c"/><rect x="72" y="190" width="1" height="1" fill="#8c8c8c"/><rect x="72" y="192" width="1" height="1" fill="#8c8c8c"/><rect x="72" y="194" width="1" height="1" fill="#8c8c8c"/><rect x="72" y="196" width="1" height="1" fill="#8c8c8c"/><rect x="72" y="198" width="1" height="1" fill="#8c8c8c"/><rect x="72" y="200" width="1" height="1" fill="#8c8c8c"/><rect x="72" y="202" width="1" height="1" fill="#8c8c8c"/><rect x="72" y="204" width="1" height="1" fill="#8c8c8c"/><rect x="72" y="206" width="1" height="1" fill="#8c8c8c"/><rect x="72" y="208" width="1" height="1" fill="#8c8c8c"/><rect x="72" y="210" width="1" height="1" fill="#8c8c8c"/><rect x="72" y="212" width="1" height="1" fill="#8c8c8c"/><rect x="72" y="214" width="1" height="1" fill="#8c8c8c"/><rect x="72" y="216" width="1" height="1" fill="#8c8c8c"/><rect x="72" y="218" width="1" height="1" fill="#8c8c8c"/><rect x="72" y="220" width="1" height="1" fill="#8c8c8c"/><rect x="72" y="222" width="1" height="1" fill="#8c8c8c"/><rect x="72" y="224" width="1" height="1" fill="#8c8c8c"/><rect x="72" y="226" width="1" height="1" fill="#8c8c8c"/><rect x="72" y="228" width="1" height="1" fill="#8c8c8c"/><rect x="72" y="230" width="1" height="1" fill="#8c8c8c"/><rect x="72" y="232" width="1" height="1" fill="#8c8c8c"/><rect x="72" y="234" width="1" height="1" fill="#8c8c8c"/><rect x="72" y="236" width="1" height="1" fill="#8c8c8c"/><rect x="72" y="238" width="1" height="1" fill="#8c8c8c"/><rect x="72" y="240" width="1" height="1" fill="#8c8c8c"/><rect x="72" y="242" width="1" height="1" fill="#8c8c8c"/><rect x="72" y="244" width="1" height="1" fill="#8c8c8c"/><rect x="72" y="246" width="1" height="1" fill="#8c8c8c"/><rect x="72" y="248" width="1" height="1" fill="#8c8c8c"/><rect x="72" y="250" width="1" height="1" fill="#8c8c8c"/><rect x="72" y="252" width="1" height="1" fill="#8c8c8c"/><rect x="72" y="254" width="1" height="1" fill="#8c8c8c"/><rect x="72" y="256" width="1" height="1" fill="#8c8c8c"/><rect x="72" y="258" width="1" height="1" fill="#8c8c8c"/><rect x="72" y="260" width="1" height="1" fill="#8c8c8c"/><rect x="72" y="262" width="1" height="1" fill="#8c8c8c"/><rect x="72" y="264" width="1" height="1" fill="#8c8c8c"/><rect x="72" y="266" width="1" height="1" fill="#8c8c8c"/><rect x="72" y="268" width="1" height="1" fill="#8c8c8c"/><rect x="73" y="172" width="1" height="1" fill="#8c8c8c"/><rect x="75" y="172" width="1" height="1" fill="#8c8c8c"/><rect x="77" y="172" width="1" height="1" fill="#8c8c8c"/><rect x="79" y="172" width="1" height="1" fill="#8c8c8c"/><rect x="81" y="172" width="1" height="1" fill="#8c8c8c"/><rect x="83" y="172" width="1" height="1" fill="#8c8c8c"/><rect x="85" y="166" width="14" height="14" fill="#000080"/><rect x="84" y="165" width="14" height="14" fill="#008000"/><path d="M86.5,167.5H94.5L96.5,169.5V172.5L94.5,174.5H91.5V177.5H86.5Z" fill="none" stroke="#fff"/><path d="M87.5,176.5V168.5H94L95.5,170V172L94,173.5H90.5V176.5" fill="none" stroke="#000"/><rect x="73" y="188" width="1" height="1" fill="#8c8c8c"/><rect x="75" y="188" width="1" height="1" fill="#8c8c8c"/><rect x="77" y="188" width="1" height="1" fill="#8c8c8c"/><rect x="79" y="188" width="1" height="1" fill="#8c8c8c"/><rect x="81" y="188" width="1" height="1" fill="#8c8c8c"/><rect x="83" y="188" width="1" height="1" fill="#8c8c8c"/><rect x="85" y="182" width="14" height="14" fill="#000080"/><rect x="84" y="181" width="14" height="14" fill="#008000"/><path d="M86.5,183.5H94.5L96.5,185.5V188.5L94.5,190.5H91.5V193.5H86.5Z" fill="none" stroke="#fff"/><path d="M87.5,192.5V184.5H94L95.5,186V188L94,189.5H90.5V192.5" fill="none" stroke="#000"/><rect x="73" y="204" width="1" height="1" fill="#8c8c8c"/><rect x="75" y="204" width="1" height="1" fill="#8c8c8c"/><rect x="77" y="204" width="1" height="1" fill="#8c8c8c"/><rect x="79" y="204" width="1" height="1" fill="#8c8c8c"/><rect x="81" y="204" width="1" height="1" fill="#8c8c8c"/><rect x="83" y="204" width="1" height="1" fill="#8c8c8c"/><rect x="85" y="198" width="14" height="14" fill="#000080"/><rect x="84" y="197" width="14" height="14" fill="#008000"/><path d="M86.5,199.5H94.5L96.5,201.5V204.5L94.5,206.5H91.5V209.5H86.5Z" fill="none" stroke="#fff"/><path d="M87.5,208.5V200.5H94L95.5,202V204L94,205.5H90.5V208.5" fill="none" stroke="#000"/><rect x="73" y="220" width="1" height="1" fill="#8c8c8c"/><rect x="75" y="220" width="1" height="1" fill="#8c8c8c"/><rect x="77" y="220" width="1" height="1" fill="#8c8c8c"/><rect x="79" y="220" width="1" height="1" fill="#8c8c8c"/><rect x="81" y="220" width="1" height="1" fill="#8c8c8c"/><rect x="83" y="220" width="1" height="1" fill="#8c8c8c"/><rect x="85" y="214" width="14" height="14" fill="#000080"/><rect x="84" y="213" width="14" height="14" fill="#008000"/><path d="M86.5,215.5H94.5L96.5,217.5V220.5L94.5,222.5H91.5V225.5H86.5Z" fill="none" stroke="#fff"/><path d="M87.5,224.5V216.5H94L95.5,218V220L94,221.5H90.5V224.5" fill="none" stroke="#000"/><rect x="73" y="236" width="1" height="1" fill="#8c8c8c"/><rect x="75" y="236" width="1" height="1" fill="#8c8c8c"/><rect x="77" y="236" width="1" height="1" fill="#8c8c8c"/><rect x="79" y="236" width="1" height="1" fill="#8c8c8c"/><rect x="81" y="236" width="1" height="1" fill="#8c8c8c"/><rect x="83" y="236" width="1" height="1" fill="#8c8c8c"/><rect x="85" y="230" width="14" height="14" fill="#000080"/><rect x="84" y="229" width="14" height="14" fill="#008000"/><path d="M87,240 Q87,236 91,236 M91,231.5 Q95,232 95,236 V240" fill="none" stroke="#fff" stroke-width="1.5" shape-rendering="auto"/><path d="M89,238 Q90,237 92,237 M93,234 Q94,235 94,238" fill="none" stroke="#000" stroke-width="1" shape-rendering="auto"/><rect x="85" y="239" width="4" height="3" fill="#fff"/><rect x="89" y="230" width="3" height="3" fill="#fff"/><rect x="93" y="239" width="4" height="3" fill="#fff"/><rect x="89" y="241" width="1" height="1" fill="#000"/><rect x="97" y="240" width="1" height="2" fill="#000"/><rect x="73" y="252" width="1" height="1" fill="#8c8c8c"/><rect x="75" y="252" width="1" height="1" fill="#8c8c8c"/><rect x="77" y="252" width="1" height="1" fill="#8c8c8c"/><rect x="79" y="252" width="1" height="1" fill="#8c8c8c"/><rect x="81" y="252" width="1" height="1" fill="#8c8c8c"/><rect x="83" y="252" width="1" height="1" fill="#8c8c8c"/><rect x="85" y="246" width="14" height="14" fill="#000080"/><rect x="84" y="245" width="14" height="14" fill="#008000"/><path d="M87,256 Q87,252 91,252 M91,247.5 Q95,248 95,252 V256" fill="none" stroke="#fff" stroke-width="1.5" shape-rendering="auto"/><path d="M89,254 Q90,253 92,253 M93,250 Q94,251 94,254" fill="none" stroke="#000" stroke-width="1" shape-rendering="auto"/><rect x="85" y="255" width="4" height="3" fill="#fff"/><rect x="89" y="246" width="3" height="3" fill="#fff"/><rect x="93" y="255" width="4" height="3" fill="#fff"/><rect x="89" y="257" width="1" height="1" fill="#000"/><rect x="97" y="256" width="1" height="2" fill="#000"/><rect x="73" y="268" width="1" height="1" fill="#8c8c8c"/><rect x="75" y="268" width="1" height="1" fill="#8c8c8c"/><rect x="77" y="268" width="1" height="1" fill="#8c8c8c"/><rect x="79" y="268" width="1" height="1" fill="#8c8c8c"/><rect x="81" y="268" width="1" height="1" fill="#8c8c8c"/><rect x="83" y="268" width="1" height="1" fill="#8c8c8c"/><rect x="85" y="262" width="14" height="14" fill="#000080"/><rect x="84" y="261" width="14" height="14" fill="#008000"/><path d="M87,272 Q87,268 91,268 M91,263.5 Q95,264 95,268 V272" fill="none" stroke="#fff" stroke-width="1.5" shape-rendering="auto"/><path d="M89,270 Q90,269 92,269 M93,266 Q94,267 94,270" fill="none" stroke="#000" stroke-width="1" shape-rendering="auto"/><rect x="85" y="271" width="4" height="3" fill="#fff"/><rect x="89" y="262" width="3" height="3" fill="#fff"/><rect x="93" y="271" width="4" height="3" fill="#fff"/><rect x="89" y="273" width="1" height="1" fill="#000"/><rect x="97" y="272" width="1" height="2" fill="#000"/><rect x="35" y="284" width="1" height="1" fill="#8c8c8c"/><rect x="37" y="284" width="1" height="1" fill="#8c8c8c"/><rect x="39" y="284" width="1" height="1" fill="#8c8c8c"/><rect x="41" y="284" width="1" height="1" fill="#8c8c8c"/><rect x="43" y="284" width="1" height="1" fill="#8c8c8c"/><path d="M47,278.5 L59,277 L61.5,278 L60.5,286 L49,291.5 L47,290Z" fill="#e8c000" shape-rendering="auto"/><path d="M49,280 L61.5,278.2 L60.5,286 L49,291.5Z" fill="url(#fg)" shape-rendering="auto"/><path d="M47,278.5 L54,278 L48.5,283Z" fill="#201800" shape-rendering="auto"/><path d="M48,279 V289" stroke="#2a2000" stroke-width="1.6" fill="none" shape-rendering="auto"/><path d="M54,278 L59,277.5" stroke="#8a8a20" stroke-width="1" fill="none" shape-rendering="auto"/><rect x="3.5" y="355.5" width="22" height="21" fill="#cce8ff" stroke="#3399ff"/><rect x="6.5" y="358.5" width="6" height="6" rx="1.5" fill="#fff" stroke="#8a9cb0" shape-rendering="auto"/><path d="M7.4,361.5 H11.6 M9.5,359.4 V363.6" stroke="#000" stroke-width="1.5" shape-rendering="auto"/><rect x="6.5" y="367.5" width="6" height="6" rx="1.5" fill="#fff" stroke="#8a9cb0" shape-rendering="auto"/><path d="M7.4,370.5 H11.6 M9.5,368.4 V372.6" stroke="#000" stroke-width="1.5" shape-rendering="auto"/><rect x="15" y="360" width="4" height="1" fill="#405040"/><rect x="15" y="362" width="3" height="1" fill="#a0b0c8"/><rect x="19" y="362" width="3" height="1" fill="#a0b0c8"/><rect x="15" y="364" width="3" height="1" fill="#a0b0c8"/><rect x="19" y="364" width="3" height="1" fill="#a0b0c8"/><rect x="15" y="366" width="3" height="1" fill="#a0b0c8"/><rect x="19" y="366" width="3" height="1" fill="#a0b0c8"/><rect x="15" y="368" width="3" height="1" fill="#a0b0c8"/><rect x="19" y="368" width="3" height="1" fill="#a0b0c8"/><rect x="15" y="371" width="4" height="1" fill="#405040"/><rect x="15" y="373" width="3" height="1" fill="#a0b0c8"/><rect x="19" y="373" width="3" height="1" fill="#a0b0c8"/><text x="34" y="365" font-family="Liberation Serif" font-weight="bold" font-size="10" fill="#3a5aa0">A</text><text x="34.5" y="373" font-family="Liberation Serif" font-weight="bold" font-size="10" fill="#a04848">Z</text><rect x="47" y="358" width="1" height="13" fill="#000"/><path d="M45,367 L47.5,372 L50,367Z" fill="#000" shape-rendering="auto"/><rect x="114" y="358" width="1" height="16" fill="#c8c8c8"/><rect x="127" y="359" width="14" height="14" fill="#000080"/><rect x="126" y="358" width="14" height="14" fill="#00c4c4"/><text x="129.4" y="371" font-family="Liberation Sans" font-weight="bold" font-size="12.5" fill="#000">?</text><text x="128.6" y="370.2" font-family="Liberation Sans" font-weight="bold" font-size="12.5" fill="#fff">?</text></svg>
</body></html>
